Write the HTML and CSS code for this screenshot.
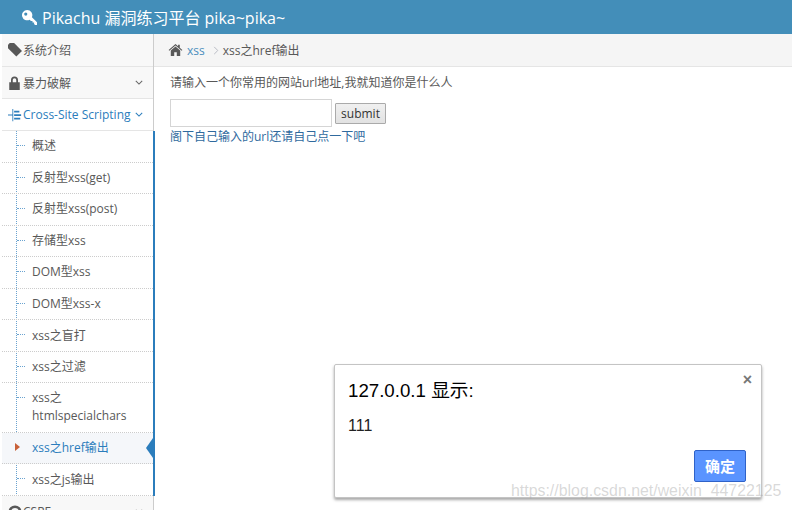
FILE: index.html
```html
<!DOCTYPE html>
<html lang="zh-CN">
<head>
<meta charset="UTF-8">
<title>Pikachu 漏洞练习平台</title>
<link rel="stylesheet" href="styles.css">
</head>
<body>
<div class="navbar">
    <svg class="key-icon" viewBox="0 0 16 16"><path d="M5.500 0a5.500 5.500 0 1 0 2.700 10.300l1.300 1.300h1.700v1.700h1.700V15l1 1H16v-3L10.600 7.600A5.500 5.500 0 0 0 5.500 0zM4 2.600a1.700 1.700 0 1 1 0 3.400 1.700 1.700 0 0 1 0-3.400z" fill="#fff" fill-rule="evenodd"/></svg>
    <span>Pikachu 漏洞练习平台 pika~pika~</span>
</div>
<div class="main">
    <div class="sidebar">
        <div class="menu-item first">
            <svg class="menu-icon" viewBox="0 0 16 16"><path d="M0 2 2 0h5l9 9-6.500 6.500L0 6z" fill="#585858"/></svg>
            <span class="menu-text">系统介绍</span>
        </div>
        <div class="menu-item">
            <svg class="menu-icon lock" viewBox="0 0 14 16"><path d="M3 7V4.500a4 4 0 0 1 8 0V7h2v9H1V7zm2 0h4V4.500a2 2 0 0 0-4 0z" fill="#585858" fill-rule="evenodd"/></svg>
            <span class="menu-text">暴力破解</span>
            <svg class="chevron" viewBox="0 0 10 6"><path d="M1 1l4 4 4-4" fill="none" stroke="#666" stroke-width="1.300"/></svg>
        </div>
        <div class="menu-item open">
            <svg class="menu-icon" viewBox="0 0 16 16"><path d="M5 1h1v14H5zM0 7.500h5v1H0zM7 3h6v2H7zM7 7h8v2H7zM7 11h7v2H7z" fill="#2b7dbc"/></svg>
            <span class="menu-text">Cross-Site Scripting</span>
            <svg class="chevron" viewBox="0 0 10 6"><path d="M1 1l4 4 4-4" fill="none" stroke="#2b7dbc" stroke-width="1.300"/></svg>
        </div>
        <ul class="submenu">
            <li class="sub-item">概述</li>
            <li class="sub-item">反射型xss(get)</li>
            <li class="sub-item">反射型xss(post)</li>
            <li class="sub-item">存储型xss</li>
            <li class="sub-item">DOM型xss</li>
            <li class="sub-item">DOM型xss-x</li>
            <li class="sub-item">xss之盲打</li>
            <li class="sub-item">xss之过滤</li>
            <li class="sub-item double">xss之<br>htmlspecialchars</li>
            <li class="sub-item active">xss之href输出</li>
            <li class="sub-item">xss之js输出</li>
        </ul>
        <div class="menu-item">
            <svg class="menu-icon" viewBox="0 0 16 16"><circle cx="8" cy="8" r="6" fill="none" stroke="#585858" stroke-width="3"/></svg>
            <span class="menu-text">CSRF</span>
            <svg class="chevron" viewBox="0 0 10 6"><path d="M1 1l4 4 4-4" fill="none" stroke="#666" stroke-width="1.300"/></svg>
        </div>
    </div>
    <div class="content">
        <div class="breadcrumbs">
            <svg class="home-icon" viewBox="0 0 16 14"><path d="M8 0l3 2.600V1h2v3.300L16 7l-.8.900L8 1.700.8 7.900 0 7zM8 3l5.500 4.700V14H9.500V9.500h-3V14h-4V7.700z" fill="#585858"/></svg>
            <a class="crumb-link">xss</a>
            <svg class="crumb-sep" viewBox="0 0 6 10"><path d="M1 1l4 4-4 4" fill="none" stroke="#b2b6bf" stroke-width="1"/></svg>
            <span>xss之href输出</span>
        </div>
        <div class="page-body">
            <p class="hint">请输入一个你常用的网站url地址,我就知道你是什么人</p>
            <form class="url-form">
                <input class="url-input" type="text">
                <button class="submit-btn" type="button">submit</button>
            </form>
            <a class="result-link">阁下自己输入的url还请自己点一下吧</a>
        </div>
    </div>
</div>
<div class="dialog">
    <span class="dialog-close">×</span>
    <div class="dialog-title">127.0.0.1 显示:</div>
    <div class="dialog-msg">111</div>
    <div class="dialog-actions"><button class="ok-btn" type="button">确定</button></div>
</div>
<div class="watermark">https://blog.csdn.net/weixin_44722125</div>
</body>
</html>
```

FILE: styles.css
```css
html, body {
    height: 100%;
}
body {
    margin: 0;
    overflow: hidden;
    background: #fff;
    color: #585858;
    font-family: "Open Sans", "Noto Sans CJK SC", sans-serif;
    font-size: 12px;
}
.navbar {
    display: flex;
    align-items: center;
    gap: 5px;
    height: 34px;
    padding-left: 22px;
    background: #438eb9;
    color: #fff;
    font-size: 16px;
}
.key-icon {
    width: 15px;
    height: 15px;
}
.main {
    display: flex;
    height: 476px;
    padding-left: 2px;
}
.sidebar {
    flex: none;
    width: 151px;
    border-right: 1px solid #ccc;
    background: #f2f2f2;
}
.menu-item {
    display: flex;
    align-items: center;
    height: 32px;
    padding-left: 6px;
    background: #f8f8f8;
    border-bottom: 1px solid #e5e5e5;
    box-sizing: border-box;
}
.menu-item.first {
    height: 33px;
}
.menu-item.open {
    color: #2b7dbc;
    background: #fff;
    padding-left: 6px;
}
.menu-icon {
    width: 14px;
    height: 14px;
    margin-right: 1px;
}
.menu-icon.lock {
    width: 13px;
    margin-right: 2px;
}
.menu-text {
    flex: 1;
}
.chevron {
    width: 8px;
    height: 5px;
    margin-right: 10px;
}
.submenu {
    position: relative;
    list-style: none;
    margin: 0;
    padding: 0;
    width: 153px;
    border-right: 2px solid #2b7dbc;
    box-sizing: border-box;
    background: #fff;
}
.submenu::before {
    content: "";
    position: absolute;
    top: 0;
    bottom: 0;
    left: 14px;
    border-left: 1px dotted #6aa3d0;
}
.sub-item {
    position: relative;
    display: flex;
    align-items: center;
    height: 31.55px;
    padding-left: 30px;
    line-height: 18px;
    border-bottom: 1px dotted #ccc;
    box-sizing: border-box;
}
.sub-item::before {
    content: "";
    position: absolute;
    left: 15px;
    top: 14px;
    width: 8px;
    border-top: 1px dotted #6aa3d0;
}
.sub-item.double {
    display: block;
    height: 49.55px;
    padding-top: 6px;
}
.sub-item.active {
    color: #2b7dbc;
    background: #f5f7fa;
}
.sub-item.active::before {
    left: 13px;
    top: 10px;
    width: 0;
    border: 0;
    border-left: 5px solid #c86139;
    border-top: 4px solid transparent;
    border-bottom: 4px solid transparent;
}
.sub-item.active::after {
    content: "";
    position: absolute;
    right: 0;
    top: 5px;
    border-right: 7px solid #2b7dbc;
    border-top: 10px solid transparent;
    border-bottom: 10px solid transparent;
}
.content {
    flex: 1;
}
.breadcrumbs {
    display: flex;
    align-items: center;
    height: 33px;
    padding-left: 14px;
    background: #f5f5f5;
    border-bottom: 1px solid #e5e5e5;
    box-sizing: border-box;
}
.home-icon {
    width: 15px;
    height: 12px;
    margin-right: 4px;
}
.crumb-link {
    color: #4c8fbd;
}
.crumb-sep {
    width: 6px;
    height: 9px;
    margin: 0 4px 0 8px;
}
.page-body {
    padding: 7px 0 0 16px;
}
.hint {
    margin: 0 0 7px;
    line-height: 18px;
    color: #585858;
}
.url-form {
    display: flex;
    align-items: flex-end;
    gap: 3px;
}
.url-input {
    width: 162px;
    height: 28px;
    padding: 0;
    border: 1px solid #d5d5d5;
    box-sizing: border-box;
    background: #fff;
}
.submit-btn {
    width: 51px;
    height: 21px;
    margin-bottom: 3px;
    padding: 0;
    border: 1px solid #aaa;
    border-radius: 1px;
    background: linear-gradient(#f0f0f0, #e2e2e2);
    color: #333;
    font: 12px "Open Sans", sans-serif;
}
.result-link {
    display: block;
    margin-top: 2px;
    line-height: 16px;
    color: #2f6a9e;
}
.dialog {
    position: absolute;
    left: 334px;
    top: 364px;
    width: 428px;
    height: 134px;
    padding: 15px 16px 0 13px;
    box-sizing: border-box;
    background: #fff;
    border-radius: 2px;
    border: 1px solid #c4c4c4;
    box-shadow: 0 2px 3px rgba(0, 0, 0, 0.35);
    color: #000;
    font-family: "Liberation Sans", "Noto Sans CJK SC", sans-serif;
}
.dialog-close {
    position: absolute;
    top: 6px;
    right: 9px;
    color: #777;
    font: bold 16px "Liberation Sans", sans-serif;
}
.dialog-title {
    font-size: 18.7px;
    line-height: 22px;
}
.dialog-msg {
    margin-top: 15px;
    font-size: 16px;
    line-height: 18px;
    color: #222;
}
.dialog-actions {
    display: flex;
    justify-content: flex-end;
    margin-top: 15px;
}
.ok-btn {
    width: 52px;
    height: 32px;
    margin-right: -1px;
    padding: 0 0 2px;
    border: 1px solid #2f62c8;
    border-radius: 2px;
    background: #5a94ff;
    color: #fff;
    font: bold 15px "Noto Sans CJK SC", sans-serif;
}
.watermark {
    position: absolute;
    left: 511px;
    top: 482px;
    color: rgba(170, 170, 170, 0.45);
    font: 15.9px "Liberation Sans", sans-serif;
    white-space: nowrap;
}
```
